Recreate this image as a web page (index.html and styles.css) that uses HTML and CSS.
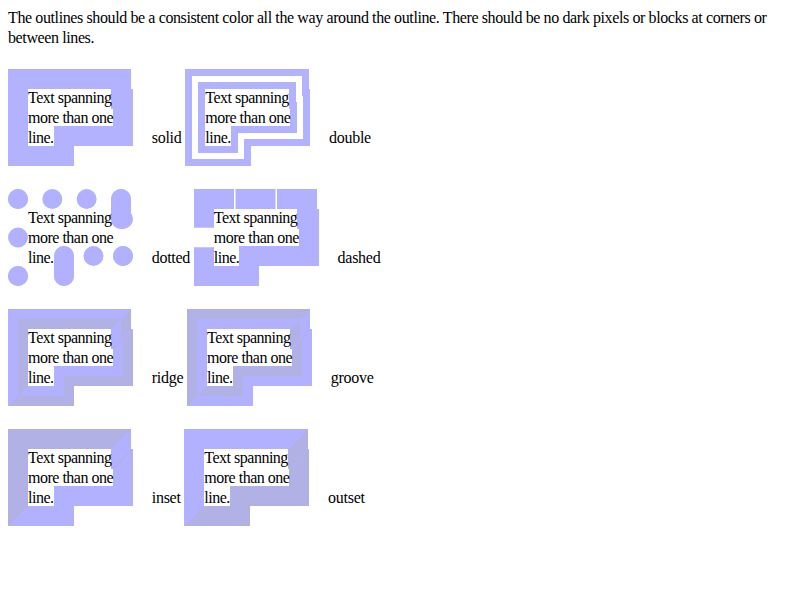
FILE: index.html
```html
<!DOCTYPE html>
<html>
<head>
<meta charset="utf-8">
<title>Outline test</title>
<link rel="stylesheet" href="styles.css">
</head>
<body>
<p class="intro">The outlines should be a consistent color all the way around the outline. There should be no dark pixels or blocks at corners or between lines.</p>
<div class="row"><div class="box"><span class="o solid">Text spanning more than one line.</span></div> solid <div class="box"><span class="o double">Text spanning more than one line.</span></div> double</div>
<div class="row"><div class="box"><span class="o dotted">Text spanning more than one line.</span></div> dotted <div class="box"><span class="o dashed">Text spanning more than one line.</span></div> dashed</div>
<div class="row"><div class="box"><span class="o ridge">Text spanning more than one line.</span></div> ridge <div class="box"><span class="o groove">Text spanning more than one line.</span></div> groove</div>
<div class="row"><div class="box"><span class="o inset">Text spanning more than one line.</span></div> inset <div class="box"><span class="o outset">Text spanning more than one line.</span></div> outset</div>
</body>
</html>
```

FILE: styles.css
```css
html, body {
  background: #ffffff;
}
body {
  margin: 8px;
  font-family: "Liberation Serif", "Times New Roman", serif;
  font-size: 16px;
  line-height: 20px;
  letter-spacing: -0.39px;
  color: #000000;
}
.intro {
  margin: 0 0 20px 0;
}
.row {
  margin: 0 0 20px 0;
  letter-spacing: -0.27px;
}
.box {
  display: inline-block;
  width: 100px;
  margin: 20px;
  line-height: 20px;
  letter-spacing: -0.5px;
}
.o {
  background: #ffffff;
  outline-width: 20px;
  outline-color: rgba(0, 0, 255, 0.3);
}
.solid { outline-style: solid; }
.double { outline-style: double; }
.dotted { outline-style: dotted; }
.dashed { outline-style: dashed; }
.ridge { outline-style: ridge; }
.groove { outline-style: groove; }
.inset { outline-style: inset; }
.outset { outline-style: outset; }
```
